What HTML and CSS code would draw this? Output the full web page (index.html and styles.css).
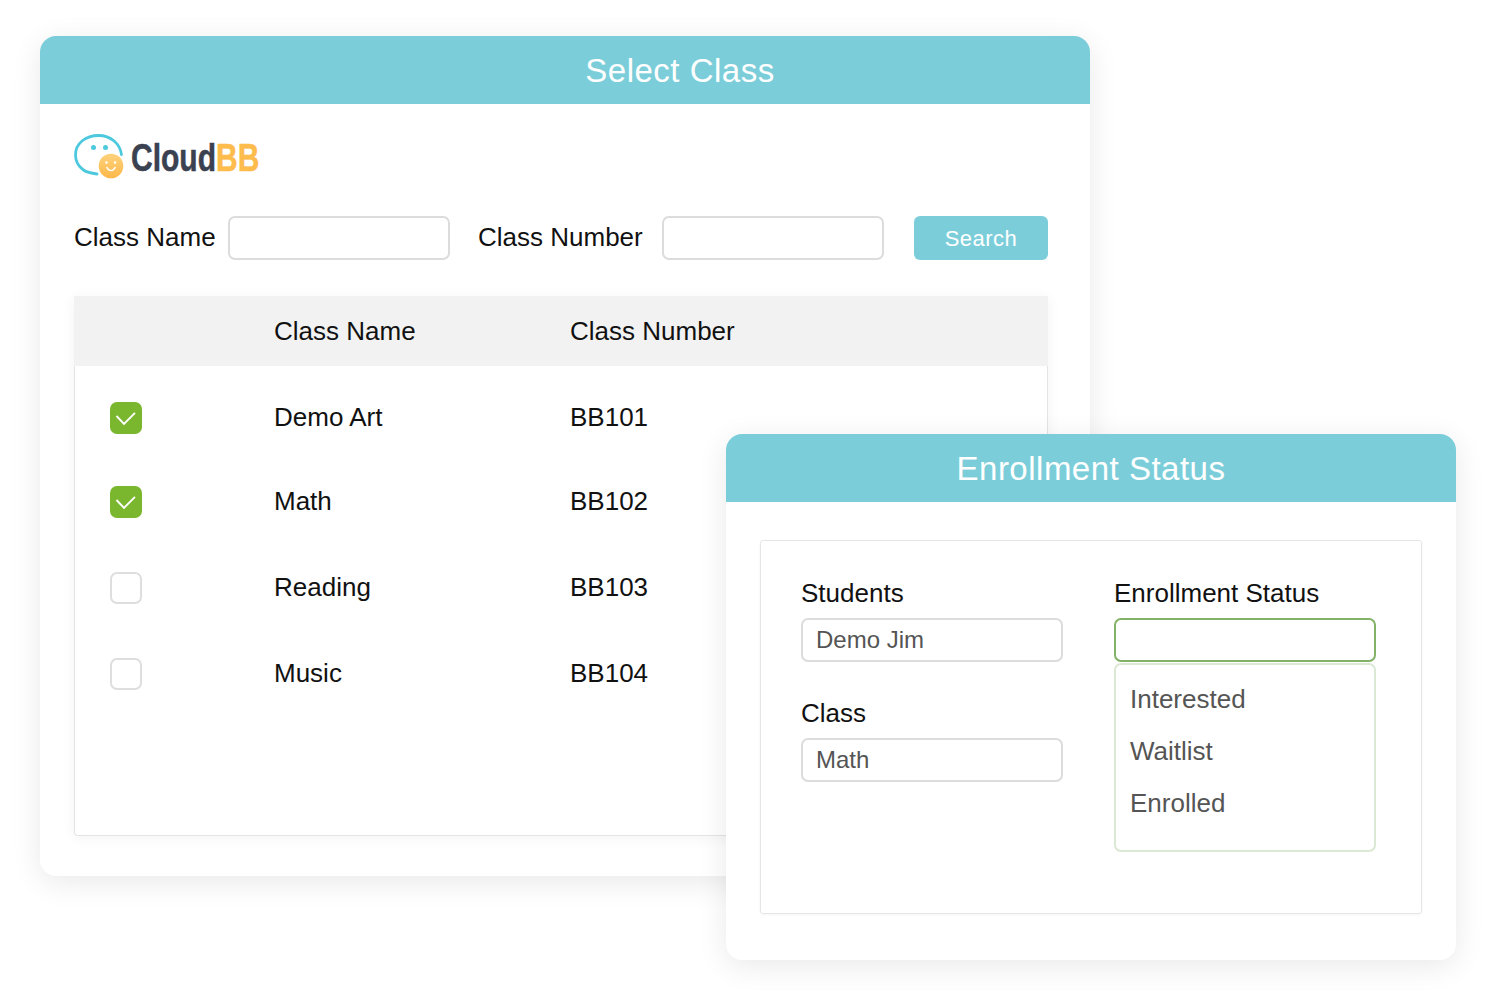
FILE: index.html
```html
<!DOCTYPE html>
<html lang="en">
<head>
<meta charset="utf-8">
<title>Select Class</title>
<link rel="stylesheet" href="styles.css">
</head>
<body>
<main class="canvas">
  <section class="card card-class">
    <h1 class="card-title title-offset">Select Class</h1>
    <div class="card-body class-body">
      <div class="logo">
        <svg class="logo-mark" width="50" height="46" viewBox="0 0 50 46" aria-hidden="true">
          <defs>
            <linearGradient id="smile" x1="0" y1="0" x2="0" y2="1">
              <stop offset="0" stop-color="#fdd27c"/>
              <stop offset="1" stop-color="#fdb84a"/>
            </linearGradient>
          </defs>
          <path d="M23 40C18 39.400 13 38.500 9.500 36C4 32 1.500 27 1.500 21C1.500 9 12 1.500 24.500 1.500C37 1.500 46 10 47.500 20.500" fill="none" stroke="#4dc9de" stroke-width="2.800" stroke-linecap="round"/>
          <circle cx="19.500" cy="13.500" r="2.500" fill="#4dc9de"/>
          <circle cx="31.500" cy="13.500" r="2.500" fill="#4dc9de"/>
          <circle cx="37" cy="32" r="12.300" fill="url(#smile)"/>
          <circle cx="32.500" cy="28.500" r="1.300" fill="#ffffff"/>
          <circle cx="41" cy="28.500" r="1.300" fill="#ffffff"/>
          <path d="M33 33.500C34.500 37.500 39.500 37.500 41 33.500" fill="none" stroke="#ffffff" stroke-width="1.500" stroke-linecap="round"/>
        </svg>
        <span class="logo-word">Cloud<span class="logo-accent">BB</span></span>
      </div>
      <div class="search-row">
        <label class="search-label">Class Name</label>
        <span class="field search-field"></span>
        <label class="search-label label-number">Class Number</label>
        <span class="field search-field"></span>
        <button class="search-btn">Search</button>
      </div>
      <div class="table">
        <div class="table-head">
          <span class="col-check"></span>
          <span class="col-name">Class Name</span>
          <span class="col-num">Class Number</span>
        </div>
        <div class="table-rows">
          <div class="row row-tight">
            <span class="col-check"><span class="check is-on"><svg width="22" height="15" viewBox="0 0 22 15"><path d="M1.500 5L9 12.800L20 1.800" fill="none" stroke="#fff" stroke-width="1.900"/></svg></span></span>
            <span class="col-name">Demo Art</span><span class="col-num">BB101</span>
          </div>
          <div class="row">
            <span class="col-check"><span class="check is-on"><svg width="22" height="15" viewBox="0 0 22 15"><path d="M1.500 5L9 12.800L20 1.800" fill="none" stroke="#fff" stroke-width="1.900"/></svg></span></span>
            <span class="col-name">Math</span><span class="col-num">BB102</span>
          </div>
          <div class="row">
            <span class="col-check"><span class="check"></span></span>
            <span class="col-name">Reading</span><span class="col-num">BB103</span>
          </div>
          <div class="row">
            <span class="col-check"><span class="check"></span></span>
            <span class="col-name">Music</span><span class="col-num">BB104</span>
          </div>
        </div>
      </div>
    </div>
  </section>

  <section class="card card-status">
    <h1 class="card-title">Enrollment Status</h1>
    <div class="card-body status-body">
      <div class="status-panel">
        <div class="status-col">
          <div class="form-item">
            <div class="form-label">Students</div>
            <div class="field value-field">Demo Jim</div>
          </div>
          <div class="form-item">
            <div class="form-label">Class</div>
            <div class="field value-field">Math</div>
          </div>
        </div>
        <div class="status-col">
          <div class="form-label">Enrollment Status</div>
          <div class="field field-active"></div>
          <ul class="dropdown">
            <li>Interested</li>
            <li>Waitlist</li>
            <li>Enrolled</li>
          </ul>
        </div>
      </div>
    </div>
  </section>
</main>
</body>
</html>
```

FILE: styles.css
```css
* { box-sizing: border-box; }
html, body { margin: 0; padding: 0; background: #fff; }
body { font-family: "Liberation Sans", Arial, sans-serif; color: #111; overflow: hidden; }
.canvas { position: relative; width: 1488px; height: 1004px; }

.card { position: absolute; background: #fff; border-radius: 16px; box-shadow: 0 6px 30px rgba(0,0,0,.09); }
.card-class { left: 40px; top: 36px; width: 1050px; height: 840px; }
.card-status { left: 726px; top: 434px; width: 730px; height: 526px; }
.card-title { margin: 0; height: 68px; background: #7bced9; border-radius: 16px 16px 0 0; color: #fff; font-size: 33px; font-weight: 400; line-height: 70px; text-align: center; letter-spacing: .5px; }
.title-offset { padding-left: 230px; }

.class-body { padding: 30px 42px 0 34px; }
.logo { display: flex; align-items: center; height: 46px; }
.logo-mark { flex: none; margin-right: 7px; }
.logo-word { font-family: "Liberation Sans", sans-serif; font-size: 38px; line-height: 46px; font-weight: 700; color: #3a4150; padding-top: 2px; -webkit-text-stroke: .5px currentColor; transform: scaleX(.79); transform-origin: left center; white-space: nowrap; }
.logo-accent { color: #fdbc4c; }

.search-row { display: flex; align-items: center; margin-top: 36px; height: 44px; }
.search-label { font-size: 26px; color: #111; white-space: nowrap; width: 154px; padding-bottom: 2px; }
.label-number { width: 184px; margin-left: 28px; }
.field { display: block; height: 44px; border: 2px solid #dcdcdc; border-radius: 7px; background: #fff; }
.search-field { width: 222px; }
.search-btn { width: 134px; height: 44px; margin-left: 30px; padding: 2px 0 0; border: 0; border-radius: 6px; background: #7bced9; color: #fff; font: 400 22px "Liberation Sans", Arial, sans-serif; letter-spacing: .5px; }

.table { margin-top: 36px; height: 540px; border: 1px solid #e4e4e4; border-top: 0; border-radius: 0 0 4px 4px; box-shadow: 0 2px 14px rgba(0,0,0,.05); }
.table-head { display: flex; align-items: center; height: 70px; margin: 0 -1px; background: #f2f2f2; font-size: 26px; }
.col-check { width: 200px; padding-left: 36px; flex: none; display: flex; }
.col-name { width: 296px; flex: none; }
.col-num { flex: none; }
.table-rows { display: flex; flex-direction: column; gap: 54px; padding-top: 36px; }
.row { display: flex; align-items: center; height: 32px; font-size: 26px; margin-left: -1px; }
.row .col-name, .row .col-num { padding-bottom: 2px; }
.row-tight { margin-bottom: -2px; }
.check { width: 32px; height: 32px; border: 2px solid #dedede; border-radius: 7px; background: #fff; display: flex; align-items: center; justify-content: center; }
.check.is-on { background: #7ab72f; border: 0; }

.status-body { padding: 38px 34px 0; }
.status-panel { display: flex; height: 374px; border: 1px solid #e6e6e6; border-radius: 3px; padding: 37px 0 0 40px; box-shadow: 0 1px 3px rgba(0,0,0,.04); }
.status-col { width: 262px; flex: none; }
.status-col + .status-col { margin-left: 51px; }
.form-item { height: 120px; }
.form-label { font-size: 26px; line-height: 30px; height: 40px; color: #111; }
.value-field { font-size: 24px; line-height: 40px; padding-left: 13px; color: #555; }
.field-active { border-color: #82b267; }
.dropdown { list-style: none; margin: 1px 0 0; padding: 8px 0 0 14px; height: 189px; border: 2px solid #dbe8d4; border-radius: 7px; font-size: 26px; color: #555; }
.dropdown li { height: 52px; line-height: 52px; }
```
